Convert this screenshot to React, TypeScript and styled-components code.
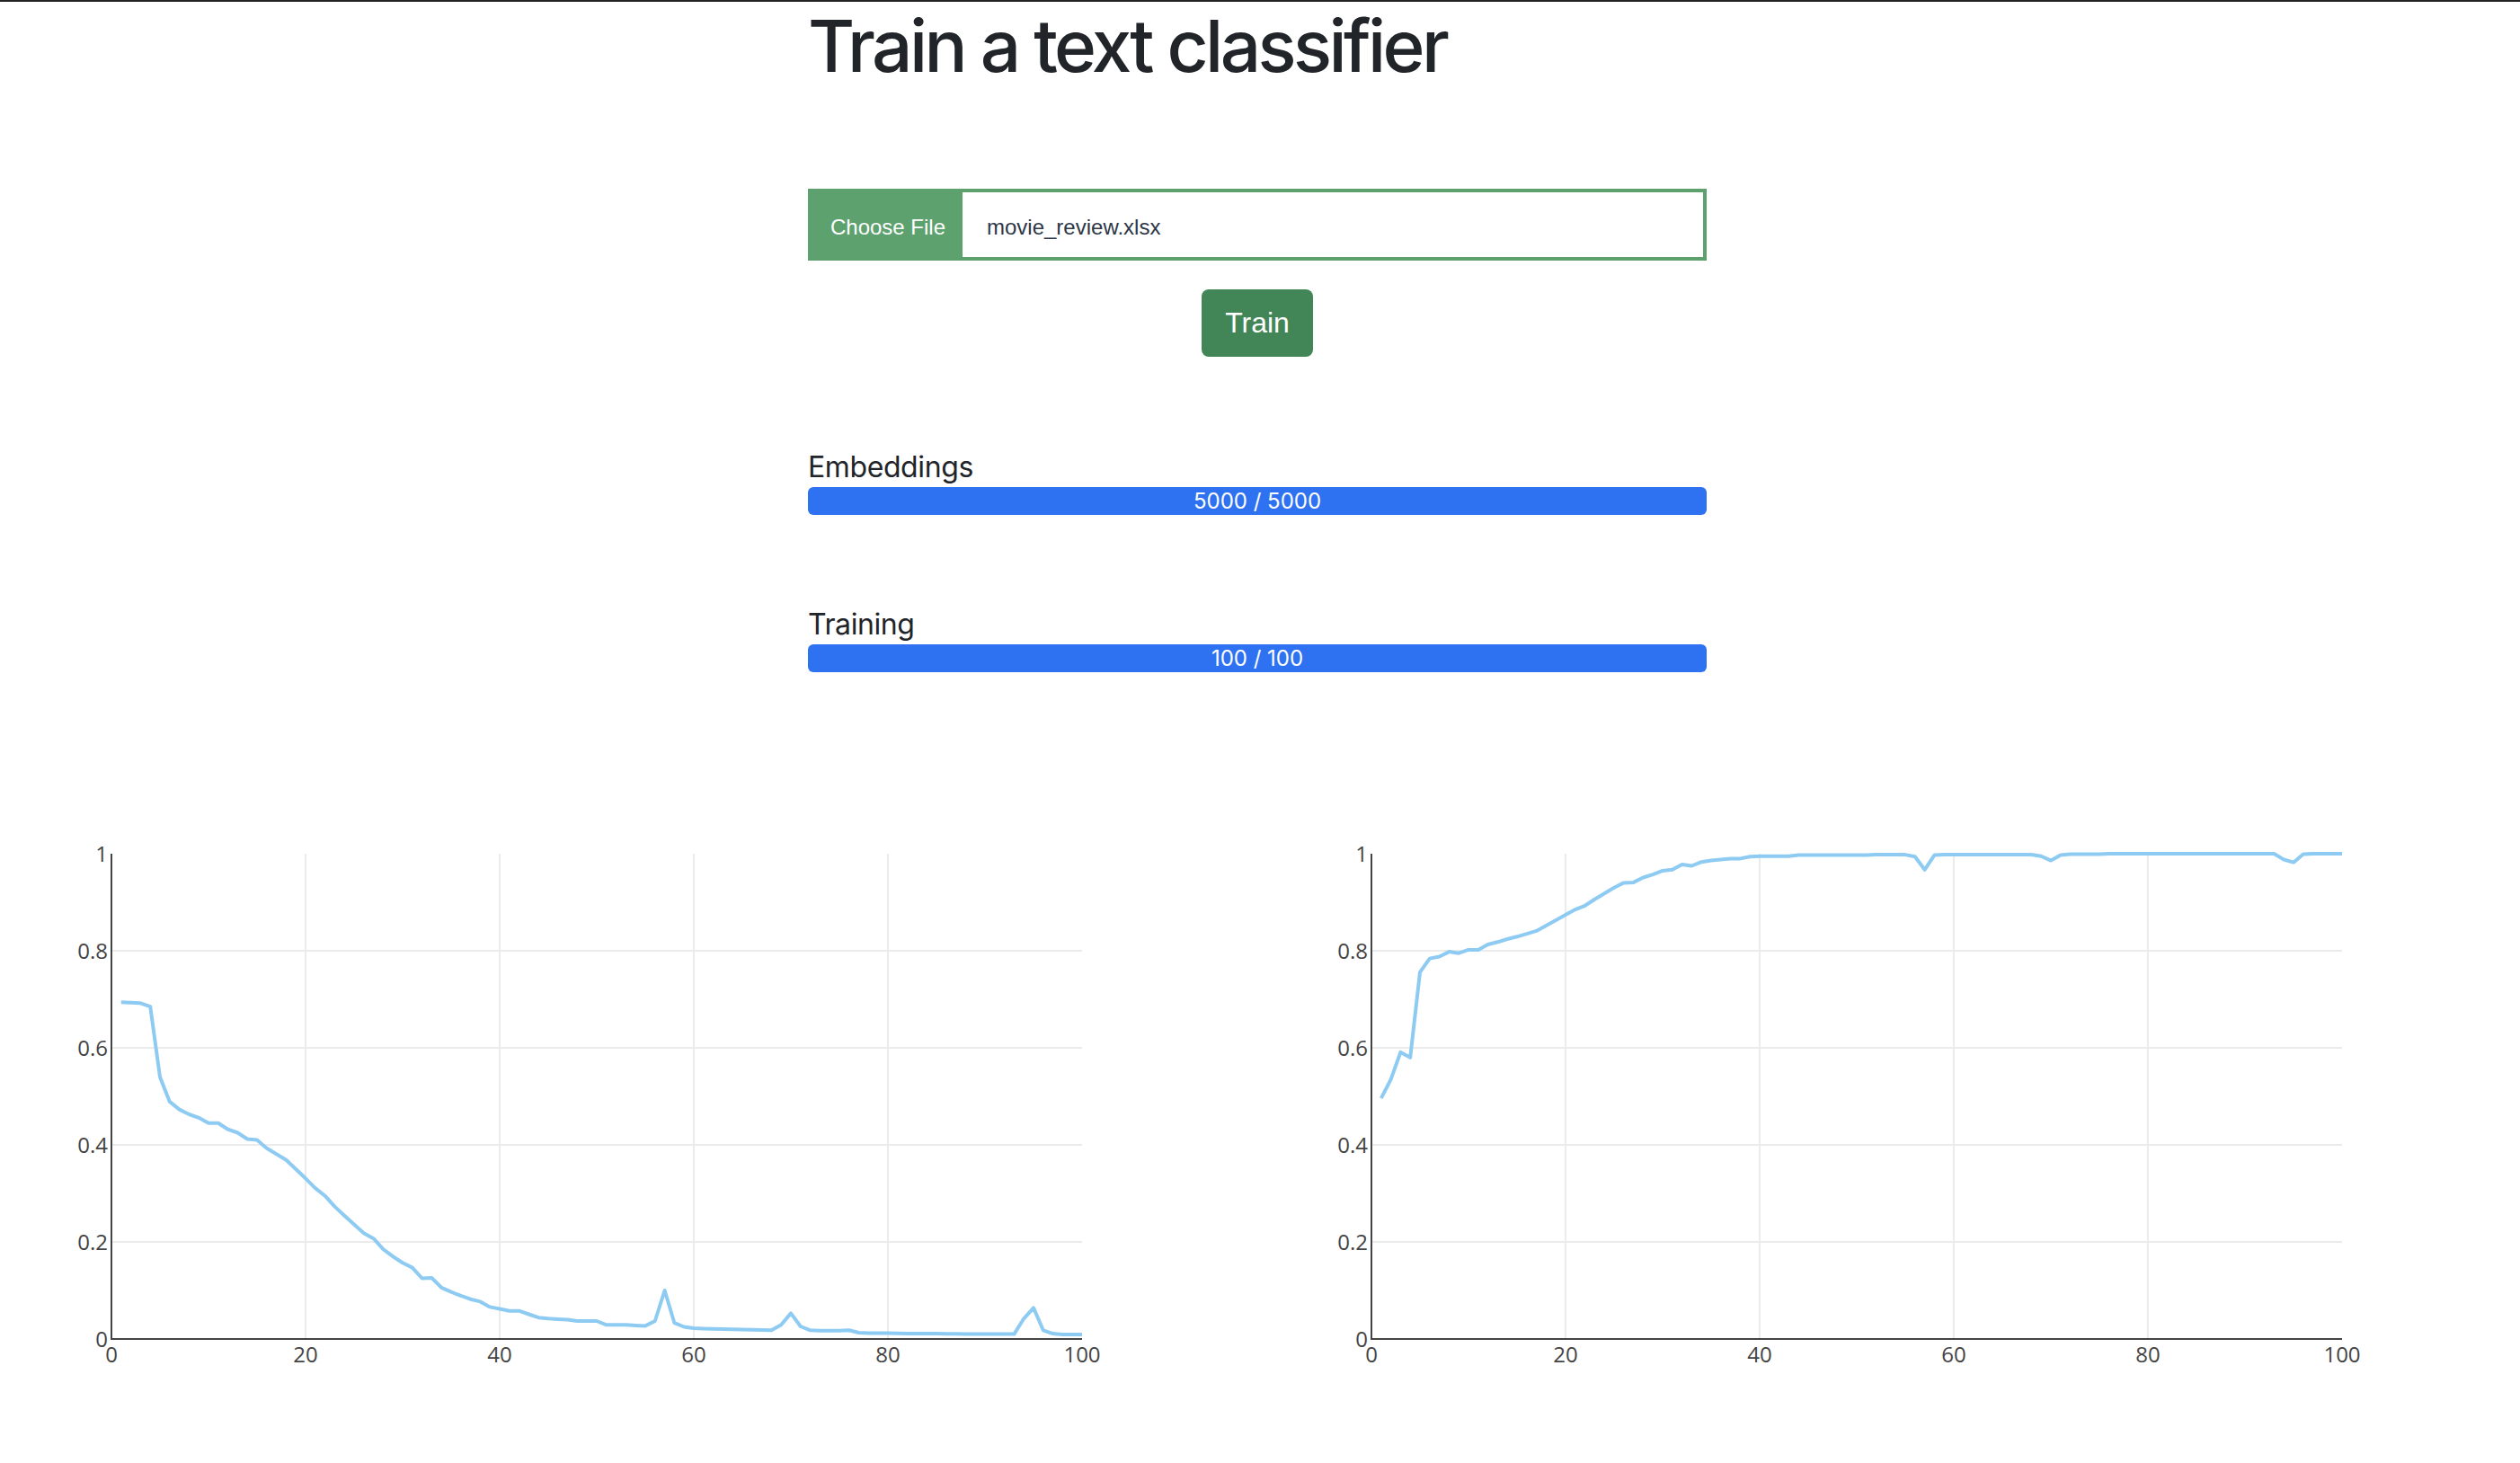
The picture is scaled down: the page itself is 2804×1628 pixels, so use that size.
import React from "react";
import styled, { createGlobalStyle } from "styled-components";

const GlobalStyle = createGlobalStyle`
  html, body {
    margin: 0;
    padding: 0;
    background: #ffffff;
  }
  body {
    font-family: Inter, "Liberation Sans", Arial, sans-serif;
    color: #212529;
  }
  * { box-sizing: border-box; }
`;

const TopRule = styled.div`
  height: 2px;
  background: #232323;
`;

const Container = styled.main`
  width: 1000px;
  margin-left: calc(50% - 503px);
  display: flex;
  flex-direction: column;
`;

const Title = styled.h1`
  margin: 1px 0 0;
  font-family: Inter, "Liberation Sans", sans-serif;
  font-weight: 500;
  font-size: 80px;
  line-height: 96px;
  letter-spacing: -3.6px;
  color: #212529;
`;

const FileField = styled.div`
  margin-top: 111px;
  height: 80px;
  border: 4px solid #5da16f;
  display: flex;
  align-items: stretch;
  background: #ffffff;
`;

const ChooseButton = styled.span`
  width: 168px;
  background: #5da16f;
  color: #ffffff;
  font-family: "Liberation Sans", Arial, sans-serif;
  font-size: 24px;
  display: flex;
  align-items: center;
  justify-content: center;
  padding: 5px 0 0 2px;
`;

const FileName = styled.span`
  flex: 1;
  display: flex;
  align-items: center;
  padding: 5px 0 0 27px;
  font-family: "Liberation Sans", Arial, sans-serif;
  font-size: 24px;
  color: #2d3748;
`;

const TrainButton = styled.button`
  align-self: center;
  margin-top: 32px;
  width: 124px;
  height: 75px;
  border: none;
  border-radius: 8px;
  background: #428658;
  color: #ffffff;
  font-family: "Liberation Sans", Arial, sans-serif;
  font-size: 32px;
  padding: 0;
  cursor: pointer;
`;

const ProgressBlock = styled.section<{ $gap: number }>`
  margin-top: ${(p) => p.$gap}px;
  display: flex;
  flex-direction: column;
  gap: 2px;
`;

const ProgressLabel = styled.div`
  font-family: Inter, "Liberation Sans", sans-serif;
  font-size: 32px;
  line-height: 40px;
  letter-spacing: -0.4px;
  color: #212529;
`;

const ProgressTrack = styled.div`
  height: 31px;
  border-radius: 6px;
  background: #e9ecef;
  overflow: hidden;
  display: flex;
`;

const ProgressFill = styled.div`
  background: #2e72f2;
  color: #ffffff;
  font-family: Inter, "Liberation Sans", sans-serif;
  font-size: 24px;
  display: flex;
  align-items: center;
  justify-content: center;
`;

const ChartRow = styled.div`
  margin-top: 153px;
  display: grid;
  grid-template-columns: 1fr 1fr;
`;

const ChartBox = styled.div`
  height: 640px;
  display: flex;
`;

const lossData = [
  0.694, 0.693, 0.692, 0.685, 0.54, 0.489, 0.473, 0.463, 0.456, 0.445,
  0.445, 0.432, 0.425, 0.412, 0.41, 0.393, 0.381, 0.369, 0.35, 0.331,
  0.311, 0.295, 0.273, 0.254, 0.236, 0.218, 0.207, 0.185, 0.17, 0.157,
  0.147, 0.125, 0.126, 0.106, 0.097, 0.089, 0.082, 0.077, 0.066, 0.062,
  0.058, 0.058, 0.051, 0.044, 0.042, 0.041, 0.04, 0.037, 0.037, 0.037,
  0.029, 0.029, 0.029, 0.028, 0.027, 0.037, 0.1, 0.033, 0.025, 0.022,
  0.0215, 0.021, 0.0205, 0.02, 0.0195, 0.019, 0.0185, 0.018, 0.029, 0.053,
  0.026, 0.018, 0.017, 0.017, 0.017, 0.018, 0.013, 0.012, 0.012, 0.012,
  0.0115, 0.0112, 0.011, 0.011, 0.011, 0.0108, 0.0106, 0.0104, 0.0102, 0.0102,
  0.0101, 0.01, 0.01, 0.042, 0.064, 0.018, 0.011, 0.009, 0.009, 0.009,
];

const accData = [
  0.496, 0.535, 0.591, 0.58, 0.756, 0.784, 0.788, 0.798, 0.795, 0.802,
  0.802, 0.813, 0.818, 0.824, 0.829, 0.835, 0.841, 0.852, 0.863, 0.874,
  0.885, 0.893, 0.906, 0.918, 0.93, 0.94, 0.941, 0.951, 0.957, 0.965,
  0.967, 0.978, 0.975, 0.983, 0.986, 0.988, 0.99, 0.99, 0.994, 0.995,
  0.995, 0.995, 0.995, 0.997, 0.997, 0.997, 0.997, 0.997, 0.997, 0.997,
  0.997, 0.998, 0.998, 0.998, 0.998, 0.994, 0.967, 0.997, 0.998, 0.998,
  0.998, 0.998, 0.998, 0.998, 0.998, 0.998, 0.998, 0.998, 0.995, 0.986,
  0.997, 0.999, 0.999, 0.999, 0.999, 1, 1, 1, 1, 1,
  1, 1, 1, 1, 1, 1, 1, 1, 1, 1,
  1, 1, 1, 0.988, 0.982, 0.999, 1, 1, 1, 1,
];

const PLOT_LEFT = 124;
const PLOT_TOP = 49;
const PLOT_W = 1080;
const PLOT_H = 540;

function LineChart({ data }: { data: number[] }) {
  const xs = (v: number) => PLOT_LEFT + (v / 100) * PLOT_W;
  const ys = (v: number) => PLOT_TOP + PLOT_H - v * PLOT_H;
  const path = data
    .map((v, i) => `${i === 0 ? "M" : "L"}${xs(i + 1).toFixed(1)},${ys(v).toFixed(1)}`)
    .join(" ");
  const xTicks = [0, 20, 40, 60, 80, 100];
  const yTicks = [0, 0.2, 0.4, 0.6, 0.8, 1];
  return (
    <svg width="1402" height="640" viewBox="0 0 1402 640">
      {xTicks
        .filter((t) => t !== 0 && t !== 100)
        .map((t) => (
          <line key={`gx${t}`} x1={xs(t)} x2={xs(t)} y1={PLOT_TOP} y2={PLOT_TOP + PLOT_H} stroke="#ebebeb" strokeWidth={2} />
        ))}
      {yTicks
        .filter((t) => t !== 0 && t !== 1)
        .map((t) => (
          <line key={`gy${t}`} x1={PLOT_LEFT} x2={PLOT_LEFT + PLOT_W} y1={ys(t)} y2={ys(t)} stroke="#ebebeb" strokeWidth={2} />
        ))}
      <path d={path} fill="none" stroke="#8ecbf3" strokeWidth={4} strokeLinejoin="round" />
      <line x1={PLOT_LEFT} x2={PLOT_LEFT} y1={PLOT_TOP} y2={PLOT_TOP + PLOT_H + 1} stroke="#444" strokeWidth={2} />
      <line x1={PLOT_LEFT - 1} x2={PLOT_LEFT + PLOT_W} y1={PLOT_TOP + PLOT_H} y2={PLOT_TOP + PLOT_H} stroke="#444" strokeWidth={2} />
      {xTicks.map((t) => (
        <text
          key={`tx${t}`}
          x={xs(t)}
          y={PLOT_TOP + PLOT_H + 26}
          textAnchor="middle"
          fontFamily="'Open Sans', sans-serif"
          fontSize={24}
          fill="#444"
        >
          {t}
        </text>
      ))}
      {yTicks.map((t) => (
        <text
          key={`ty${t}`}
          x={PLOT_LEFT - 4}
          y={ys(t) + 8.5}
          textAnchor="end"
          fontFamily="'Open Sans', sans-serif"
          fontSize={24}
          fill="#444"
        >
          {t}
        </text>
      ))}
    </svg>
  );
}

function Progress({ label, value, max, gap }: { label: string; value: number; max: number; gap: number }) {
  return (
    <ProgressBlock $gap={gap}>
      <ProgressLabel>{label}</ProgressLabel>
      <ProgressTrack>
        <ProgressFill style={{ width: `${(value / max) * 100}%` }}>
          {value} / {max}
        </ProgressFill>
      </ProgressTrack>
    </ProgressBlock>
  );
}

export default function App() {
  return (
    <>
      <GlobalStyle />
      <TopRule />
      <Container>
        <Title>Train a text classifier</Title>
        <FileField>
          <ChooseButton>Choose File</ChooseButton>
          <FileName>movie_review.xlsx</FileName>
        </FileField>
        <TrainButton>Train</TrainButton>
        <Progress label="Embeddings" value={5000} max={5000} gap={103} />
        <Progress label="Training" value={100} max={100} gap={102} />
      </Container>
      <ChartRow>
        <ChartBox>
          <LineChart data={lossData} />
        </ChartBox>
        <ChartBox>
          <LineChart data={accData} />
        </ChartBox>
      </ChartRow>
    </>
  );
}
